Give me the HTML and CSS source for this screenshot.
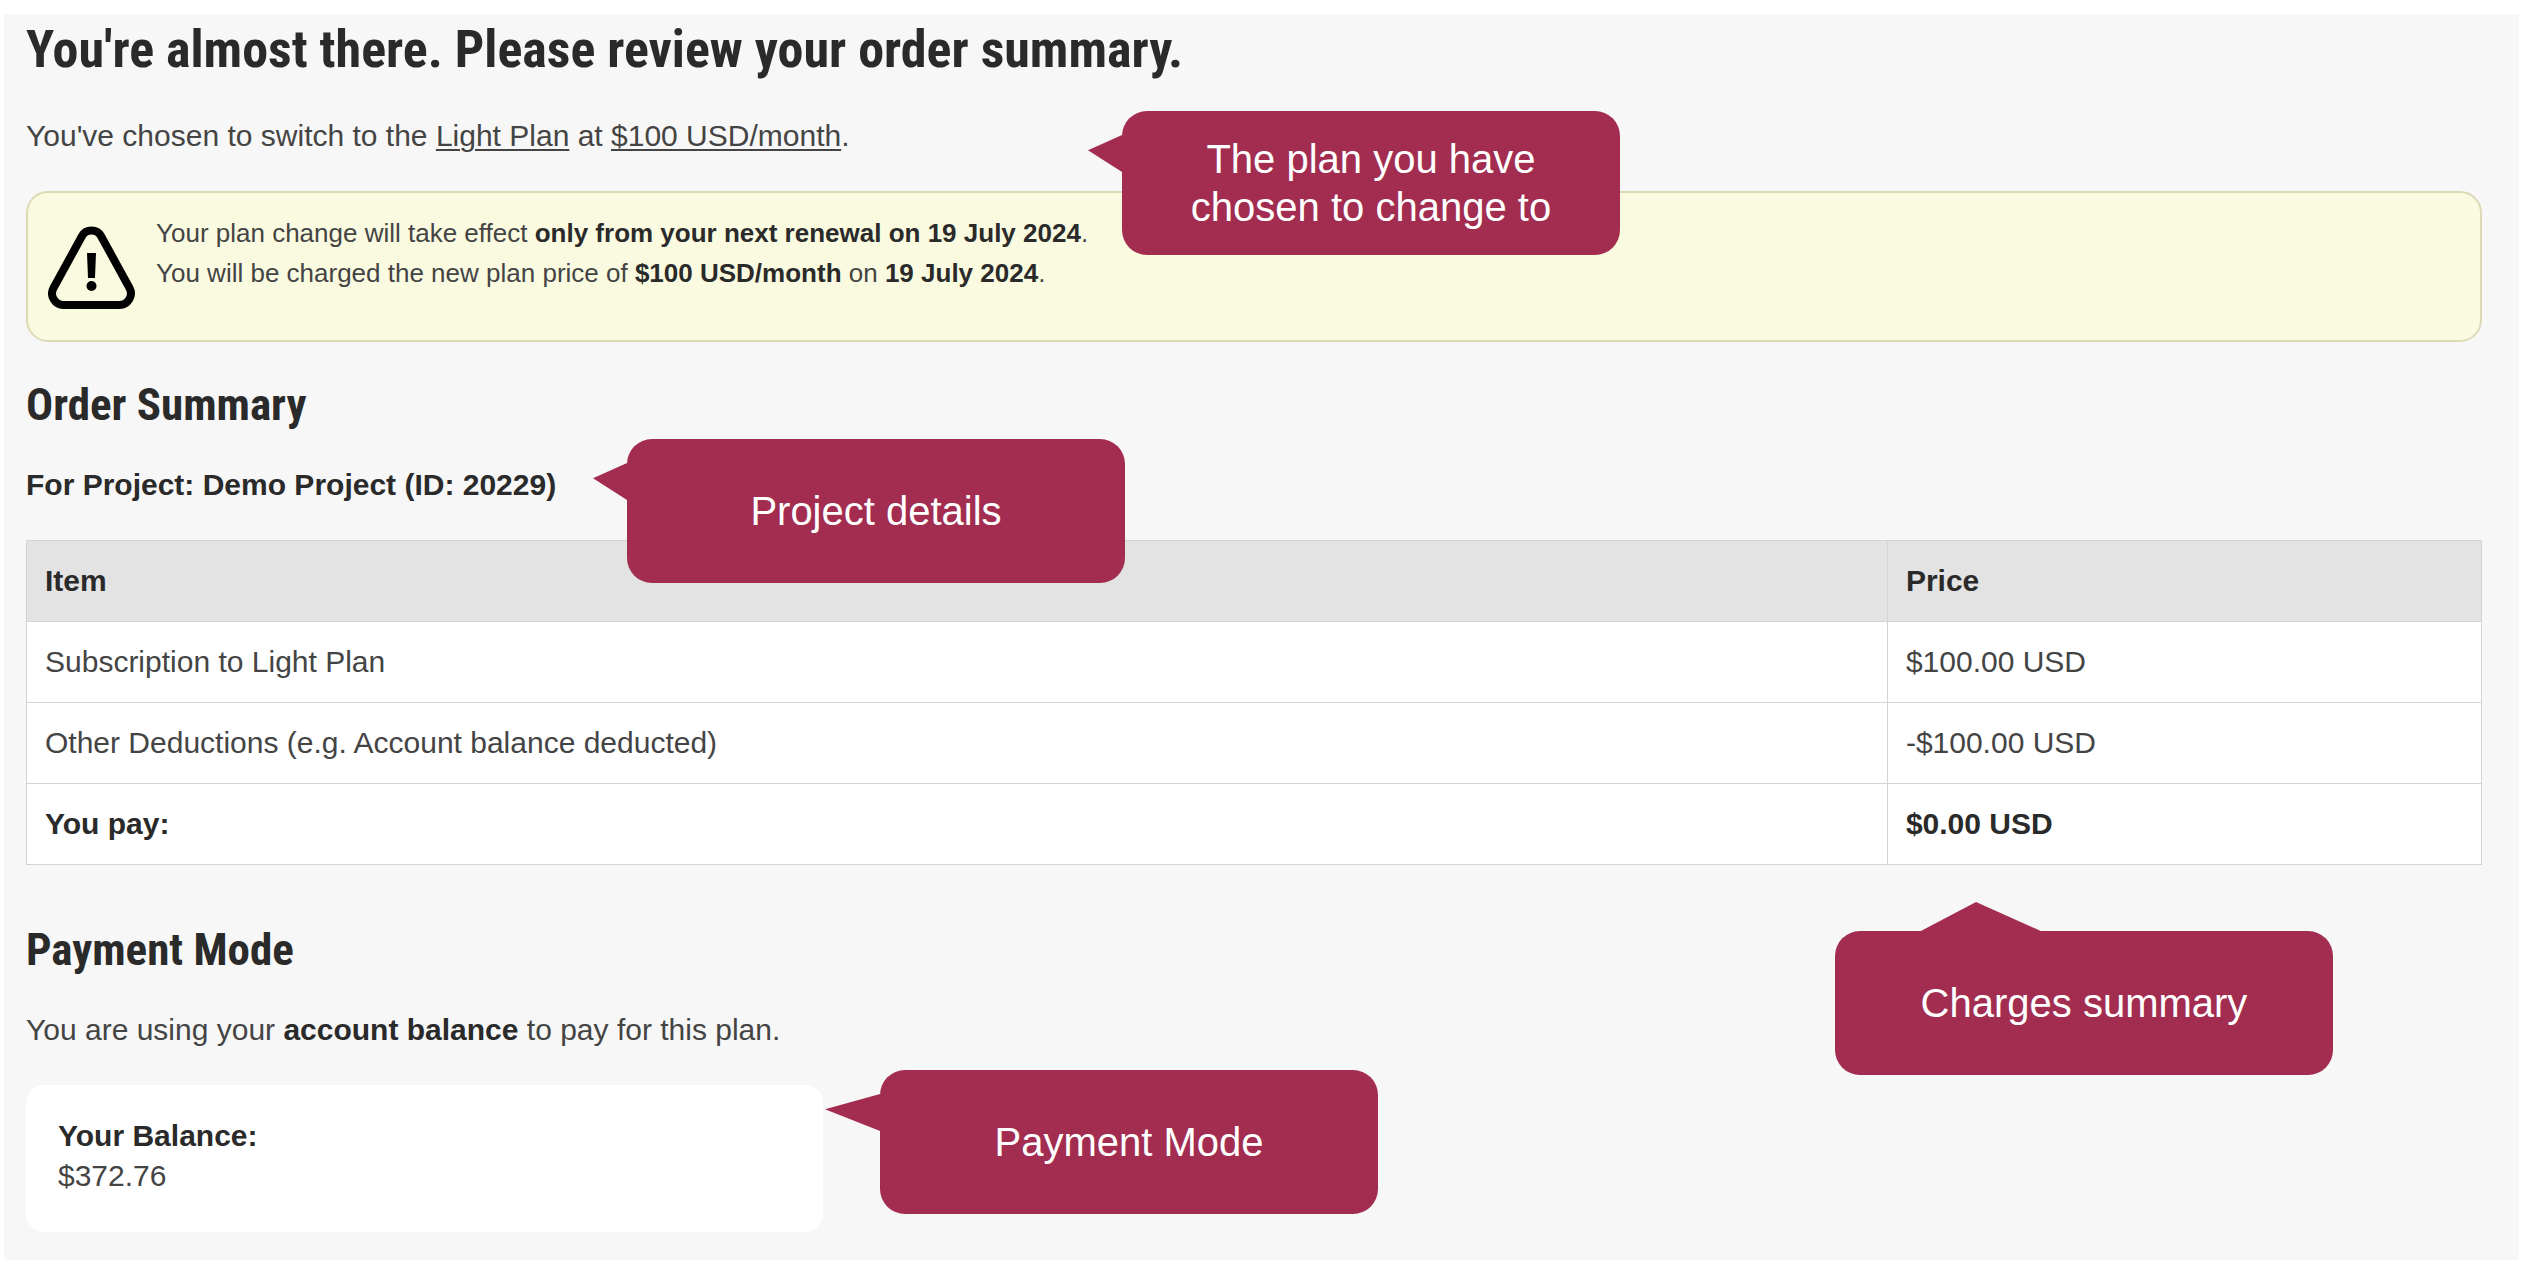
FILE: index.html
```
<!DOCTYPE html>
<html lang="en">
<head>
<meta charset="utf-8">
<meta name="viewport" content="width=device-width, initial-scale=1">
<title>Order summary</title>
<link rel="stylesheet" href="styles.css">
</head>
<body>
<main class="panel">
  <section class="intro">
    <h1 class="title">You're almost there. Please review your order summary.</h1>
    <p class="text">You've chosen to switch to the <u>Light Plan</u> at <u>$100 USD/month</u>.</p>
    <div class="alert" role="note">
      <svg class="alert-icon" viewBox="0 0 88 84" aria-hidden="true">
        <path d="M34 10 A11 11 0 0 1 53 10 L81.500 62 A11.500 11.500 0 0 1 71.500 79 H15.500 A11.500 11.500 0 0 1 5.500 62 Z" fill="none" stroke="#000" stroke-width="8"/>
        <path d="M39 27 H48 L47 52 H40 Z"/>
        <circle cx="43.500" cy="60" r="5"/>
      </svg>
      <p class="alert-text">Your plan change will take effect <strong>only from your next renewal on 19 July 2024</strong>.<br>You will be charged the new plan price of <strong>$100 USD/month</strong> on <strong>19 July 2024</strong>.</p>
    </div>
    <aside class="callout callout-plan">The plan you have chosen to change to</aside>
  </section>

  <section class="order">
    <h2 class="heading">Order Summary</h2>
    <h3 class="text">For Project: Demo Project (ID: 20229)</h3>
    <table class="summary">
      <thead>
        <tr><th scope="col">Item</th><th scope="col" class="price">Price</th></tr>
      </thead>
      <tbody>
        <tr><td>Subscription to Light Plan</td><td>$100.00 USD</td></tr>
        <tr><td>Other Deductions (e.g. Account balance deducted)</td><td>-$100.00 USD</td></tr>
      </tbody>
      <tfoot>
        <tr><th scope="row">You pay:</th><td>$0.00 USD</td></tr>
      </tfoot>
    </table>
    <aside class="callout callout-project">Project details</aside>
    <aside class="callout callout-charges">Charges summary</aside>
  </section>

  <section class="payment">
    <h2 class="heading">Payment Mode</h2>
    <p class="text">You are using your <strong>account balance</strong> to pay for this plan.</p>
    <div class="balance">
      <strong>Your Balance:</strong>
      <span>$372.76</span>
    </div>
    <aside class="callout callout-payment">Payment Mode</aside>
  </section>
</main>
</body>
</html>
```
FILE: styles.css
```
* { box-sizing: border-box; }

body {
  margin: 0;
  padding: 14px 5px 2px 4px;
  background: #fff;
  color: #444;
  font-family: "Liberation Sans", Arial, sans-serif;
  font-size: 30px;
  line-height: 40px;
}

h1, h2, h3, p { margin: 0; }

strong, th, h3, tfoot td { color: #2a2a2a; font-weight: 700; }

.panel {
  padding: 4px 37px 28px 22px;
  background: #f7f7f7;
}

.intro, .order, .payment { position: relative; }
.order { margin-top: 37px; }
.payment { margin-top: 59px; }

.title, .heading {
  color: #2a2a2a;
  font-family: "Roboto Condensed", "Liberation Sans Narrow", Roboto, sans-serif;
  font-weight: 700;
}

.title { font-size: 52px; line-height: 64px; }
.heading { font-size: 45px; line-height: 52px; }

.text { margin-top: 34px; font-size: 30px; }

u { text-decoration-thickness: 2px; text-underline-offset: 3px; }

.alert {
  display: flex;
  gap: 20px;
  margin-top: 35px;
  padding: 20px;
  min-height: 151px;
  border: 2px solid #dcdab5;
  border-radius: 22px;
  background: #fafae0;
}

.alert-icon { flex: none; width: 88px; height: 84px; margin-top: 13px; }
.alert-text { font-size: 26px; }

.summary {
  width: 100%;
  margin-top: 35px;
  border-collapse: collapse;
  background: #fff;
}

.summary th, .summary td {
  padding: 20px 18px;
  border: 1px solid #d4d4d4;
  text-align: left;
}

.summary thead th { background: #e3e3e3; }
.summary .price { width: 24.2%; }

.balance {
  display: flex;
  flex-direction: column;
  width: 797px;
  margin-top: 35px;
  padding: 31px 32px 36px;
  border-radius: 18px;
  background: #fff;
}

.callout {
  position: absolute;
  display: flex;
  align-items: center;
  justify-content: center;
  width: 498px;
  height: 144px;
  padding: 0 60px;
  border-radius: 25px;
  background: #a22d51;
  color: #fff;
  font-size: 40px;
  line-height: 48px;
  text-align: center;
}

.callout::before {
  content: "";
  position: absolute;
  top: 24px;
  right: 100%;
  width: 34px;
  height: 37px;
  background: #a22d51;
  clip-path: polygon(0 41%, 100% 0, 100% 100%);
}

.callout-plan { top: 93px; left: 1096px; }
.callout-project { top: 60px; left: 601px; }
.callout-charges { top: 552px; right: 149px; }
.callout-payment { top: 146px; left: 854px; }
.callout-payment::before { width: 55px; }

.callout-charges::before {
  top: -29px;
  right: auto;
  left: 84px;
  width: 124px;
  height: 30px;
  clip-path: polygon(46% 0, 100% 100%, 0 100%);
}
```
